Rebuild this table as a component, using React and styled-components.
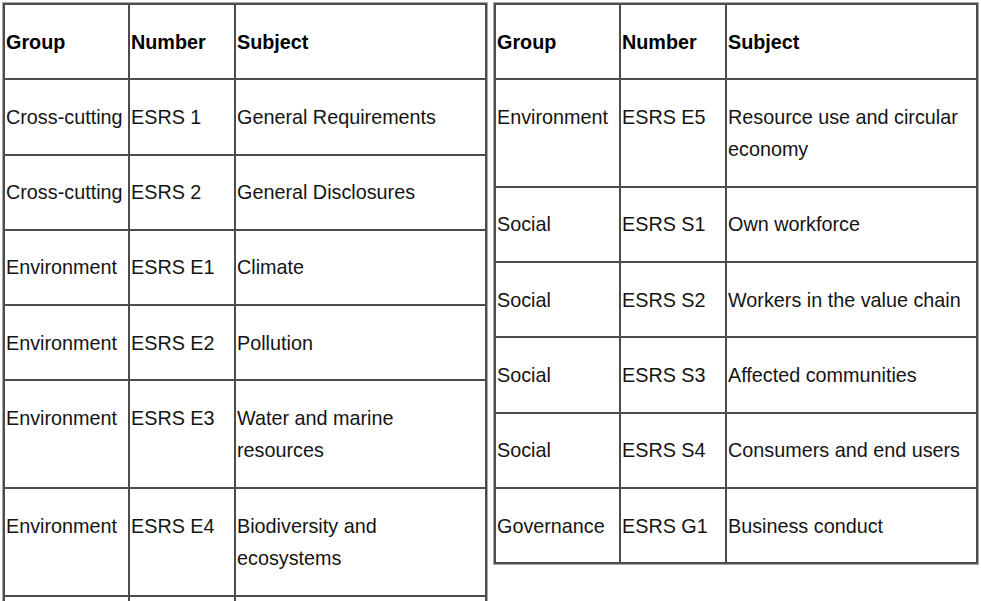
import styled, { createGlobalStyle } from 'styled-components'

const GlobalStyle = createGlobalStyle`
  html, body {
    margin: 0;
    background: #ffffff;
    font-family: "Liberation Sans", Arial, sans-serif;
    color: #111;
  }
`

/* ── Page ── */
const Page = styled.div`
  display: flex;
  align-items: flex-start;
  gap: 7px;
  padding: 3px 0 0 3px;
  height: 601px;
  overflow: hidden;
  box-sizing: border-box;
`

/* ── Table ── */
const Table = styled.table`
  width: 482px;
  table-layout: fixed;
  border-collapse: collapse;
  border: 2px solid #4c4c4c;
  box-shadow: 0 0 0 1px #a8a8a8;
  font-size: 19.8px;
  line-height: 32.3px;
`

const Cell = styled.td`
  border: 2px solid #4c4c4c;
  padding: 20.5px 1px 20.5px 1px;
  vertical-align: top;
  text-align: left;
  font-weight: ${({ $head }) => ($head ? 700 : 400)};
  color: ${({ $head }) => ($head ? '#000' : '#141414')};
`

const COLS = [125, 106, 251]

const HEAD = ['Group', 'Number', 'Subject']

const leftRows = [
  ['Cross-cutting', 'ESRS 1', 'General Requirements'],
  ['Cross-cutting', 'ESRS 2', 'General Disclosures'],
  ['Environment', 'ESRS E1', 'Climate'],
  ['Environment', 'ESRS E2', 'Pollution'],
  ['Environment', 'ESRS E3', 'Water and marine resources'],
  ['Environment', 'ESRS E4', 'Biodiversity and ecosystems'],
  ['\u00a0', '\u00a0', '\u00a0'],
]

const rightRows = [
  ['Environment', 'ESRS E5', 'Resource use and circular economy'],
  ['Social', 'ESRS S1', 'Own workforce'],
  ['Social', 'ESRS S2', 'Workers in the value chain'],
  ['Social', 'ESRS S3', 'Affected communities'],
  ['Social', 'ESRS S4', 'Consumers and end users'],
  ['Governance', 'ESRS G1', 'Business conduct'],
]

const StandardsTable = ({ rows }) => (
  <Table>
    <colgroup>
      {COLS.map((w, i) => <col key={i} style={{ width: w }} />)}
    </colgroup>
    <thead>
      <tr>
        {HEAD.map(h => <Cell as="th" $head key={h}>{h}</Cell>)}
      </tr>
    </thead>
    <tbody>
      {rows.map((r, i) => (
        <tr key={i}>
          {r.map((c, j) => <Cell key={j}>{c}</Cell>)}
        </tr>
      ))}
    </tbody>
  </Table>
)

const App = () => (
  <>
    <GlobalStyle />
    <Page>
      <StandardsTable rows={leftRows} />
      <StandardsTable rows={rightRows} />
    </Page>
  </>
)

export default App
